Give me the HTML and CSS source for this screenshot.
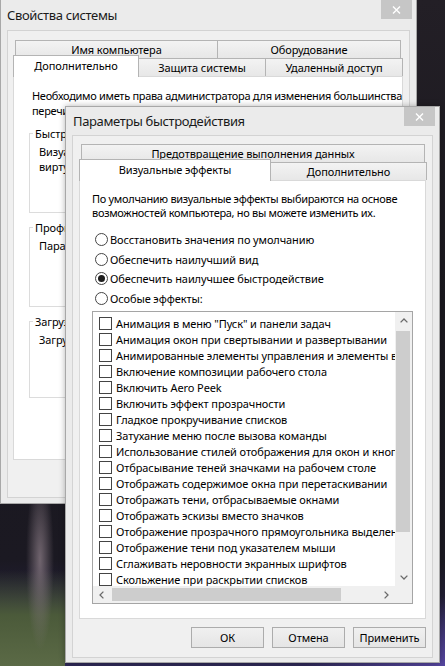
FILE: index.html
```html
<!DOCTYPE html>
<html lang="ru">
<head>
<meta charset="utf-8">
<title>Свойства системы</title>
<link rel="stylesheet" href="styles.css">
</head>
<body>
<section class="window win-sys">
  <header class="titlebar">
    <span class="title">Свойства системы</span>
    <span class="close"><svg width="9" height="8" viewBox="0 0 9 8"><path d="M1 0.5 L8 7.5 M8 0.5 L1 7.5" stroke="#fff" stroke-width="1.4" fill="none"/></svg></span>
  </header>
  <div class="client">
    <div class="tabs">
      <div class="tabrow back">
        <div class="tab w-name">Имя компьютера</div>
        <div class="tab w-hw">Оборудование</div>
      </div>
      <div class="tabrow">
        <div class="tab active w-adv">Дополнительно</div>
        <div class="tab w-prot">Защита системы</div>
        <div class="tab w-remote">Удаленный доступ</div>
      </div>
    </div>
    <div class="panel panel-sys">
      <p class="note">Необходимо иметь права администратора для изменения большинства<br>перечисленных параметров.</p>
      <div class="group g1">
        <span class="group-title">Быстродействие</span>
        <p class="group-text">Визуальные эффекты, использование процессора, оперативной и<br>виртуальной памяти</p>
      </div>
      <div class="group g2">
        <span class="group-title">Профили пользователей</span>
        <p class="group-text">Параметры рабочего стола, относящиеся ко входу в систему</p>
      </div>
      <div class="group g3">
        <span class="group-title">Загрузка и восстановление</span>
        <p class="group-text">Загрузка и восстановление системы, отладочная информация</p>
      </div>
    </div>
  </div>
</section>

<section class="window win-perf">
  <header class="titlebar">
    <span class="title">Параметры быстродействия</span>
    <span class="close"><svg width="9" height="8" viewBox="0 0 9 8"><path d="M1 0.5 L8 7.5 M8 0.5 L1 7.5" stroke="#fff" stroke-width="1.4" fill="none"/></svg></span>
  </header>
  <div class="client">
    <div class="tabs">
      <div class="tabrow back">
        <div class="tab w-dep">Предотвращение выполнения данных</div>
      </div>
      <div class="tabrow">
        <div class="tab active w-vis">Визуальные эффекты</div>
        <div class="tab w-adv2">Дополнительно</div>
      </div>
    </div>
    <div class="panel panel-perf">
      <p class="desc">По умолчанию визуальные эффекты выбираются на основе<br>возможностей компьютера, но вы можете изменить их.</p>
      <div class="radios">
        <div class="radio"><span class="dot"></span><span>Восстановить значения по умолчанию</span></div>
        <div class="radio"><span class="dot"></span><span>Обеспечить наилучший вид</span></div>
        <div class="radio checked"><span class="dot"></span><span>Обеспечить наилучшее быстродействие</span></div>
        <div class="radio"><span class="dot"></span><span>Особые эффекты:</span></div>
      </div>
      <div class="listbox">
        <ul class="items">
          <li><span class="cb"></span>Анимация в меню "Пуск" и панели задач</li>
          <li><span class="cb"></span>Анимация окон при свертывании и развертывании</li>
          <li><span class="cb"></span>Анимированные элементы управления и элементы внутри окна</li>
          <li><span class="cb"></span>Включение композиции рабочего стола</li>
          <li><span class="cb"></span>Включить Aero Peek</li>
          <li><span class="cb"></span>Включить эффект прозрачности</li>
          <li><span class="cb"></span>Гладкое прокручивание списков</li>
          <li><span class="cb"></span>Затухание меню после вызова команды</li>
          <li><span class="cb"></span>Использование стилей отображения для окон и кнопок</li>
          <li><span class="cb"></span>Отбрасывание теней значками на рабочем столе</li>
          <li><span class="cb"></span>Отображать содержимое окна при перетаскивании</li>
          <li><span class="cb"></span>Отображать тени, отбрасываемые окнами</li>
          <li><span class="cb"></span>Отображать эскизы вместо значков</li>
          <li><span class="cb"></span>Отображение прозрачного прямоугольника выделения</li>
          <li><span class="cb"></span>Отображение тени под указателем мыши</li>
          <li><span class="cb"></span>Сглаживать неровности экранных шрифтов</li>
          <li><span class="cb"></span>Скольжение при раскрытии списков</li>
        </ul>
        <div class="vscroll">
          <span class="arrow"><svg width="8" height="5" viewBox="0 0 8 5"><path d="M0.6 4.4 L4 1 L7.4 4.4" stroke="#6a6a6a" stroke-width="1.3" fill="none"/></svg></span>
          <span class="vthumb"></span>
          <span class="arrow"><svg width="8" height="5" viewBox="0 0 8 5"><path d="M0.6 0.6 L4 4 L7.4 0.6" stroke="#6a6a6a" stroke-width="1.3" fill="none"/></svg></span>
        </div>
        <div class="hscroll">
          <span class="arrow"><svg width="5" height="8" viewBox="0 0 5 8"><path d="M4.4 0.6 L1 4 L4.4 7.4" stroke="#6a6a6a" stroke-width="1.3" fill="none"/></svg></span>
          <span class="hthumb"></span>
          <span class="arrow"><svg width="5" height="8" viewBox="0 0 5 8"><path d="M0.6 0.6 L4 4 L0.6 7.4" stroke="#6a6a6a" stroke-width="1.3" fill="none"/></svg></span>
        </div>
        <div class="corner"></div>
      </div>
    </div>
    <div class="buttons">
      <button class="btn" type="button">ОК</button>
      <button class="btn" type="button">Отмена</button>
      <button class="btn" type="button">Применить</button>
    </div>
  </div>
</section>
</body>
</html>
```

FILE: styles.css
```css
* { box-sizing: border-box; }
html, body { margin: 0; padding: 0; }
body {
  width: 445px;
  height: 666px;
  overflow: hidden;
  position: relative;
  font-family: "Noto Sans", "Open Sans", sans-serif;
  font-size: 11px;
  letter-spacing: -0.1px;
  line-height: 15px;
  color: #000;
  background-color: #1c1a20;
  background-image:
    radial-gradient(ellipse 14px 90px at 40px 560px, rgba(140,125,135,.75), rgba(140,125,135,0)),
    linear-gradient(180deg, rgba(0,0,0,0) 0, rgba(0,0,0,0) 570px, #4b5a3a 615px, #5b6a46 666px),
    radial-gradient(ellipse 140px 70px at 445px 666px, #5646a0, rgba(60,50,110,0)),
    linear-gradient(180deg, #231f26 0, #1a181e 300px, #1b1922 560px, #2e2856 666px),
    linear-gradient(180deg, #353336 0, #353336 666px);
  background-size: 65px 666px, 65px 666px, 445px 666px, 445px 666px, 65px 666px;
  background-repeat: no-repeat;
}
p { margin: 0; }

.window {
  position: absolute;
  display: flex;
  flex-direction: column;
  background: #ebebeb;
  border: 1px solid #a8a8a8;
}
.win-sys { left: 0; top: -1px; width: 417px; height: 505px; }
.win-perf { left: 65px; top: 106px; width: 375px; height: 557px; box-shadow: 0 0 6px rgba(0,0,0,.3); }

.titlebar { flex: none; display: flex; align-items: flex-start; }
.win-sys .titlebar { height: 30px; }
.win-perf .titlebar { height: 28px; }
.title {
  font-size: 13px;
  letter-spacing: -0.35px;
  line-height: 18px;
  color: #1a1a1a;
  padding-left: 6px;
}
.win-sys .title { margin-top: 6px; }
.win-perf .title { margin-top: 5px; padding-left: 7px; }
.close {
  margin-left: auto;
  margin-right: 4px;
  width: 31px;
  height: 19px;
  background: #c6c6c6;
  display: flex;
  align-items: center;
  justify-content: center;
}

.client {
  flex: 1;
  display: flex;
  flex-direction: column;
  background: #f0f0f0;
  border: 1px solid #d3d3d3;
  margin: 0 6px 5px 6px;
}
.win-sys .client { padding: 9px 6px 0 5px; }
.win-perf .client { padding: 8px 6px 9px 6px; margin-bottom: 4px; }

.tabs { flex: none; display: flex; flex-direction: column; }
.tabrow { display: flex; height: 18px; }
.tabrow.back { padding: 0 2px; }
.tab {
  flex: none;
  height: 18px;
  border: 1px solid #b4b4b4;
  border-bottom: none;
  background: linear-gradient(#f3f3f3, #e7e7e7);
  display: flex;
  align-items: center;
  justify-content: center;
  white-space: nowrap;
}
.tab + .tab { margin-left: -1px; }
.tab.active {
  background: #fff;
  height: 22px;
  margin-top: -3px;
  position: relative;
  z-index: 2;
  align-items: flex-start;
  padding-top: 2px;
}
.w-name { width: 203px; }
.w-hw { width: 184px; }
.w-adv { width: 126px; }
.w-prot { width: 128px; }
.w-remote { width: 138px; }
.w-dep { width: 344px; }
.w-vis { width: 192px; }
.w-adv2 { width: 157px; }

.panel {
  flex: none;
  background: #fff;
  border: 1px solid #d9d9d9;
}
.panel-sys { height: 384px; }
.panel-perf { height: 439px; padding: 11px 12px 0 12px; }

.note { padding: 11px 0 0 18px; white-space: nowrap; letter-spacing: -0.3px; }
.group {
  border: 1px solid #dcdcdc;
  margin: 15px 15px 0 15px;
  height: 80px;
  padding-left: 9px;
}
.g2, .g3 { margin-top: 14px; }
.g3 { height: 77px; }
.group-title {
  display: block;
  width: max-content;
  margin: -8px 0 0 -6px;
  padding: 0 2px;
  background: #fff;
}
.group-text { margin-top: 3px; white-space: nowrap; }

.desc { line-height: 14px; white-space: nowrap; letter-spacing: -0.3px; }
.radios { margin-top: 10px; }
.radio { height: 19.5px; display: flex; align-items: center; padding-left: 3px; white-space: nowrap; }
.dot {
  flex: none;
  width: 13px;
  height: 13px;
  border: 1px solid #454545;
  border-radius: 50%;
  background: #fff;
  margin-right: 2px;
  display: flex;
  align-items: center;
  justify-content: center;
}
.radio.checked .dot::after {
  content: "";
  width: 7px;
  height: 7px;
  border-radius: 50%;
  background: #1e1e1e;
}

.listbox {
  margin-top: 3px;
  width: 321px;
  height: 293px;
  border: 1px solid #a5a5a5;
  display: grid;
  grid-template-columns: 1fr 17px;
  grid-template-rows: 1fr 17px;
  background: #fff;
}
.items {
  list-style: none;
  margin: 0;
  padding: 3px 0 0 6px;
  overflow: hidden;
  min-width: 0;
  min-height: 0;
}
.items li {
  height: 16px;
  display: flex;
  align-items: center;
  white-space: nowrap;
}
.cb {
  flex: none;
  width: 13px;
  height: 13px;
  border: 1px solid #444;
  background: #fff;
  margin-right: 4px;
}
.vscroll {
  background: #f0f0f0;
  display: flex;
  flex-direction: column;
}
.vscroll .arrow { flex: none; height: 17px; display: flex; align-items: center; justify-content: center; }
.vthumb { flex: none; height: 201px; margin: 2px 2px 0 1px; background: #cdcdcd; }
.vscroll .arrow:last-child { margin-top: auto; }
.hscroll {
  background: #f0f0f0;
  display: flex;
  align-items: stretch;
}
.hscroll .arrow { flex: none; width: 17px; display: flex; align-items: center; justify-content: center; }
.hthumb { flex: none; width: 229px; margin: 2px 0 2px 2px; background: #cdcdcd; }
.hscroll .arrow:last-child { margin-left: auto; }
.corner { background: #f0f0f0; }

.buttons {
  flex: none;
  display: flex;
  justify-content: flex-end;
  gap: 8px;
  margin-top: 8px;
}
.btn {
  width: 73px;
  height: 21px;
  padding: 0;
  border: 1px solid #acacac;
  background: linear-gradient(#f0f0f0, #e5e5e5);
  font-family: inherit;
  font-size: inherit;
  letter-spacing: inherit;
  color: #000;
}
```
